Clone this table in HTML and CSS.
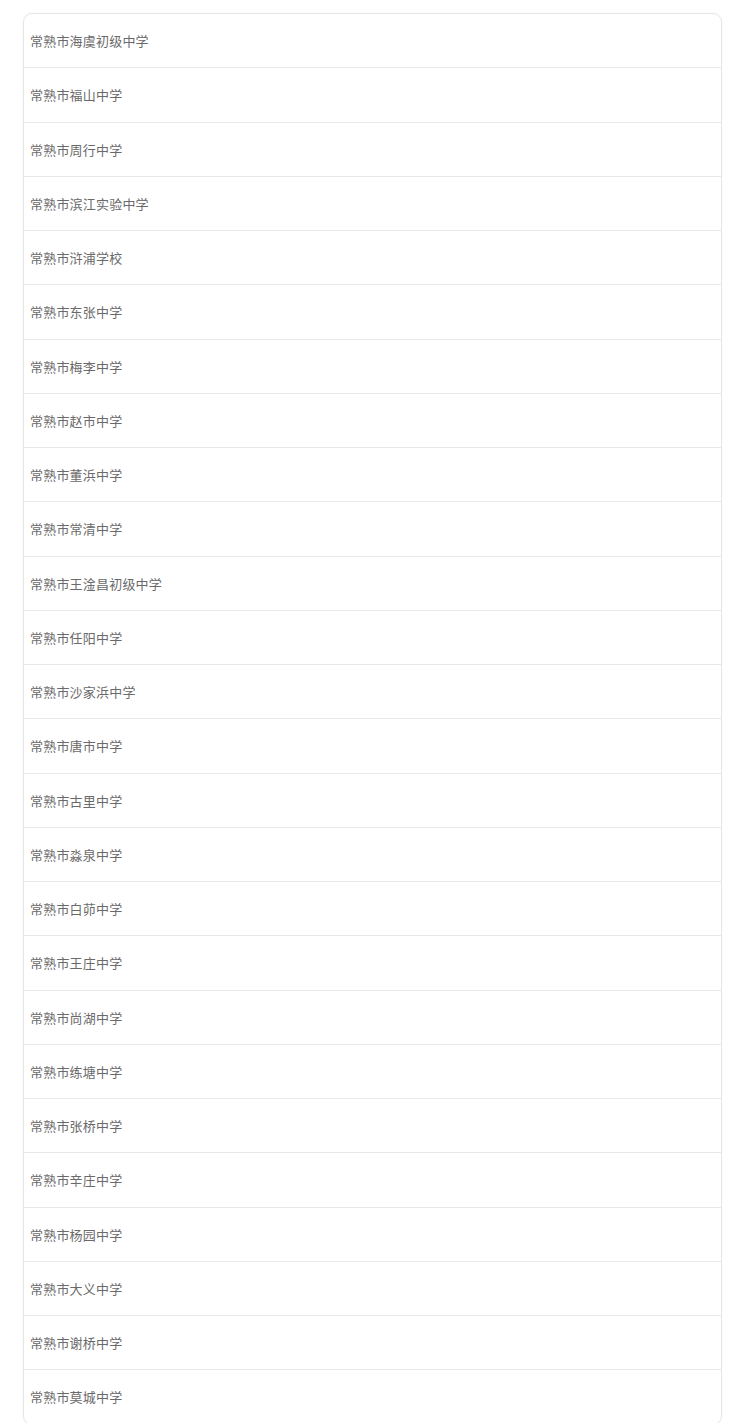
FILE: index.html
```html
<!DOCTYPE html>
<html>
<head>
    <title>常熟市学校</title>
    <meta charset="UTF-8">
    <meta name="viewport" content="width=device-width, initial-scale=1.0">
    <link rel="stylesheet" href="styles.css">
</head>
<body>
    <div class="container">
        <ul class="school-list">
            <li>常熟市海虞初级中学</li>
            <li>常熟市福山中学</li>
            <li>常熟市周行中学</li>
            <li>常熟市滨江实验中学</li>
            <li>常熟市浒浦学校</li>
            <li>常熟市东张中学</li>
            <li>常熟市梅李中学</li>
            <li>常熟市赵市中学</li>
            <li>常熟市董浜中学</li>
            <li>常熟市常清中学</li>
            <li>常熟市王淦昌初级中学</li>
            <li>常熟市任阳中学</li>
            <li>常熟市沙家浜中学</li>
            <li>常熟市唐市中学</li>
            <li>常熟市古里中学</li>
            <li>常熟市淼泉中学</li>
            <li>常熟市白茆中学</li>
            <li>常熟市王庄中学</li>
            <li>常熟市尚湖中学</li>
            <li>常熟市练塘中学</li>
            <li>常熟市张桥中学</li>
            <li>常熟市辛庄中学</li>
            <li>常熟市杨园中学</li>
            <li>常熟市大义中学</li>
            <li>常熟市谢桥中学</li>
            <li>常熟市莫城中学</li>
        </ul>
    </div>
</body>
</html>
```

FILE: styles.css
```css
body {
    margin: 0;
    padding: 0;
    background: #ffffff;
    font-family: "Noto Sans CJK SC", "Noto Sans", sans-serif;
    color: #6a6a6a;
}
.container {
    padding: 13px 11px 0 23px;
}
.school-list {
    list-style: none;
    margin: 0;
    padding: 0;
    border: 1px solid #e6e6e6;
    border-radius: 9px;
    box-shadow: 0 0 2px rgba(0, 0, 0, 0.06);
}
.school-list li {
    height: 53.25px;
    display: flex;
    align-items: center;
    padding-left: 6px;
    font-size: 13px;
    letter-spacing: 0.2px;
    border-bottom: 1px solid #e8e8e8;
}
.school-list li:last-child {
    border-bottom: none;
}
```
